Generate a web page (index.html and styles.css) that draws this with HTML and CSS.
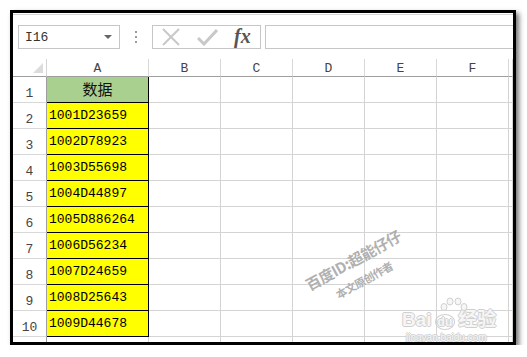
FILE: index.html
```html
<!DOCTYPE html>
<html lang="zh-CN">
<head>
    <meta charset="UTF-8">
    <title>数据</title>
    <link rel="stylesheet" href="styles.css">
</head>
<body>
  <div class="frame">
    <div class="topline"></div>
    <div class="toolbar">
      <div class="namebox">
        <span>I16</span>
        <span class="arrow"></span>
      </div>
      <div class="dots"><i></i><i></i><i></i></div>
      <div class="fxbox">
        <svg width="18" height="18" viewBox="0 0 18 18" class="ico-x">
          <path d="M1 1 L17 17 M17 1 L1 17" stroke="#c8c8c8" stroke-width="2" fill="none"/>
        </svg>
        <svg width="21" height="17" viewBox="0 0 21 17" class="ico-ok">
          <path d="M1 9 L7 15 L20 1" stroke="#c8c8c8" stroke-width="3" fill="none"/>
        </svg>
        <span class="fx">fx</span>
      </div>
      <div class="formula"></div>
    </div>

    <div class="sheet">
      <div class="corner"><span class="tri"></span></div>
      <div class="colhead">A</div>
      <div class="colhead">B</div>
      <div class="colhead">C</div>
      <div class="colhead">D</div>
      <div class="colhead">E</div>
      <div class="colhead">F</div>
      <div class="colhead"></div>
    </div>

    <div class="watermark">
      <div class="wm1">百度ID:超能仔仔</div>
      <div class="wm2">本文原创作者</div>
    </div>
    <div class="baidu">
      <svg class="toes" width="28" height="14" viewBox="0 0 28 14">
        <g fill="#f6f6f6" stroke="#d0d0d0" stroke-width="1">
          <ellipse cx="4" cy="10" rx="3" ry="3.5"/>
          <ellipse cx="10" cy="4.5" rx="3" ry="3.5"/>
          <ellipse cx="18" cy="4.5" rx="3" ry="3.5"/>
          <ellipse cx="24" cy="10" rx="3" ry="3.5"/>
        </g>
      </svg>
      <div class="logo">Bai<span class="paw">du</span>经验</div>
      <div class="url">jingyan.baidu.com</div>
    </div>
  </div>

  <script type="text/javascript">
    const rows = ["数据", "1001D23659", "1002D78923", "1003D55698", "1004D44897",
      "1005D886264", "1006D56234", "1007D24659", "1008D25643", "1009D44678", null];
    const sheet = document.querySelector(".sheet");
    rows.forEach((val, i) => {
      // last row is only a sliver under the frame edge, so no number
      const num = document.createElement("div");
      num.className = "rowhead";
      num.innerText = i < 10 ? i + 1 : "";
      sheet.appendChild(num);
      const a = document.createElement("div");
      a.className = "cell";
      if (i === 0) a.className = "cell head";
      else if (val) a.className = "cell data";
      a.innerText = val || "";
      sheet.appendChild(a);
      for (let c = 0; c < 6; c++) {
        const d = document.createElement("div");
        d.className = "cell";
        sheet.appendChild(d);
      }
    });
  </script>
</body>
</html>
```

FILE: styles.css
```css
body {
    margin: 0;
    background: #fff;
    font-family: 'Liberation Mono', monospace;
}
.frame {
    position: relative;
    box-sizing: border-box;
    margin: 10px 0 0 10px;
    width: 506px;
    height: 335px;
    border: 3px solid #000;
    box-shadow: 3px 3px 5px rgba(0, 0, 0, 0.55);
    overflow: hidden;
    background: #fff;
}
.topline {
    margin-top: 1px;
    height: 1px;
    background: #d6d6d6;
}
.toolbar {
    box-sizing: border-box;
    height: 44px;
    padding: 10px 0 0 5px;
    display: flex;
    align-items: flex-start;
}
.namebox {
    box-sizing: border-box;
    width: 102px;
    height: 24px;
    border: 1px solid #c6c6c6;
    display: flex;
    align-items: center;
    justify-content: space-between;
    padding: 0 7px 0 6px;
    font-size: 13px;
    color: #333;
}
.arrow {
    width: 0;
    height: 0;
    border-left: 4px solid transparent;
    border-right: 4px solid transparent;
    border-top: 4px solid #666;
}
.dots {
    width: 32px;
    height: 24px;
    display: flex;
    flex-direction: column;
    align-items: center;
    justify-content: center;
    gap: 3px;
}
.dots i {
    width: 2px;
    height: 2px;
    background: #9a9a9a;
}
.fxbox {
    box-sizing: border-box;
    width: 109px;
    height: 24px;
    border: 1px solid #c6c6c6;
    display: flex;
    align-items: center;
    padding-left: 9px;
}
.ico-x {
    margin-right: 17px;
}
.ico-ok {
    margin-right: 16px;
}
.fx {
    font-family: 'Liberation Serif', serif;
    font-style: italic;
    font-weight: bold;
    font-size: 20px;
    color: #555;
    line-height: 20px;
    margin-top: -2px;
}
.formula {
    box-sizing: border-box;
    flex: 1;
    margin-left: 4px;
    height: 24px;
    border: 1px solid #c6c6c6;
    border-right: none;
}
.sheet {
    display: grid;
    grid-template-columns: 34px 102px repeat(5, 72px) 1fr;
    grid-template-rows: 18px repeat(11, 26px);
}
.corner {
    position: relative;
    border-right: 1px solid #d4d4d4;
    border-bottom: 1px solid #9e9e9e;
}
.tri {
    position: absolute;
    right: 3px;
    bottom: 3px;
    width: 0;
    height: 0;
    border-left: 10px solid transparent;
    border-bottom: 10px solid #dcdcdc;
}
.colhead {
    box-sizing: border-box;
    border-right: 1px solid #d8d8d8;
    border-bottom: 1px solid #9e9e9e;
    text-align: center;
    font-size: 13px;
    line-height: 18px;
    padding-top: 1px;
    color: #444;
}
.rowhead {
    box-sizing: border-box;
    border-right: 1px solid #9e9e9e;
    border-bottom: 1px solid #d8d8d8;
    text-align: center;
    font-size: 13px;
    color: #444;
    display: flex;
    align-items: flex-end;
    justify-content: center;
    padding-bottom: 1px;
}
.cell {
    box-sizing: border-box;
    border-right: 1px solid #d4d4d4;
    border-bottom: 1px solid #d4d4d4;
}
.cell.head {
    background: #a9d08e;
    border-right: 1px solid #000;
    border-bottom: 1px solid #000;
    font-family: 'Noto Sans CJK SC', sans-serif;
    font-size: 15px;
    color: #111;
    text-align: center;
    line-height: 24px;
}
.cell.data {
    background: #ffff00;
    border-right: 1px solid #000;
    border-bottom: 1px solid #000;
    font-size: 13px;
    color: #000;
    line-height: 26px;
    padding-left: 2px;
}
.watermark {
    position: absolute;
    left: 290px;
    top: 266px;
    transform: rotate(-29deg);
    transform-origin: left top;
    text-align: center;
    font-family: 'Noto Sans CJK SC', sans-serif;
    font-weight: bold;
    color: #b0b0b0;
}
.wm1 {
    font-size: 15px;
    line-height: 16px;
    letter-spacing: -0.5px;
}
.wm2 {
    font-size: 11px;
    line-height: 12px;
    margin-top: 8px;
    letter-spacing: -0.5px;
}
.baidu {
    position: absolute;
    left: 389px;
    top: 296px;
    color: #f6f6f6;
    font-family: 'Liberation Sans', 'Noto Sans CJK SC', sans-serif;
    text-shadow: 1px 0 0 #d0d0d0, -1px 0 0 #d0d0d0, 0 1px 0 #d0d0d0, 0 -1px 0 #d0d0d0;
}
.toes {
    position: absolute;
    left: 38px;
    top: -12px;
}
.logo {
    font-size: 19px;
    font-weight: bold;
    line-height: 22px;
}
.paw {
    display: inline-block;
    font-size: 12px;
    border: 1px solid #d0d0d0;
    border-radius: 50%;
    padding: 0 2px;
    margin: 0 3px;
    line-height: 14px;
}
.url {
    font-size: 10px;
    line-height: 14px;
    padding-left: 4px;
}
```
